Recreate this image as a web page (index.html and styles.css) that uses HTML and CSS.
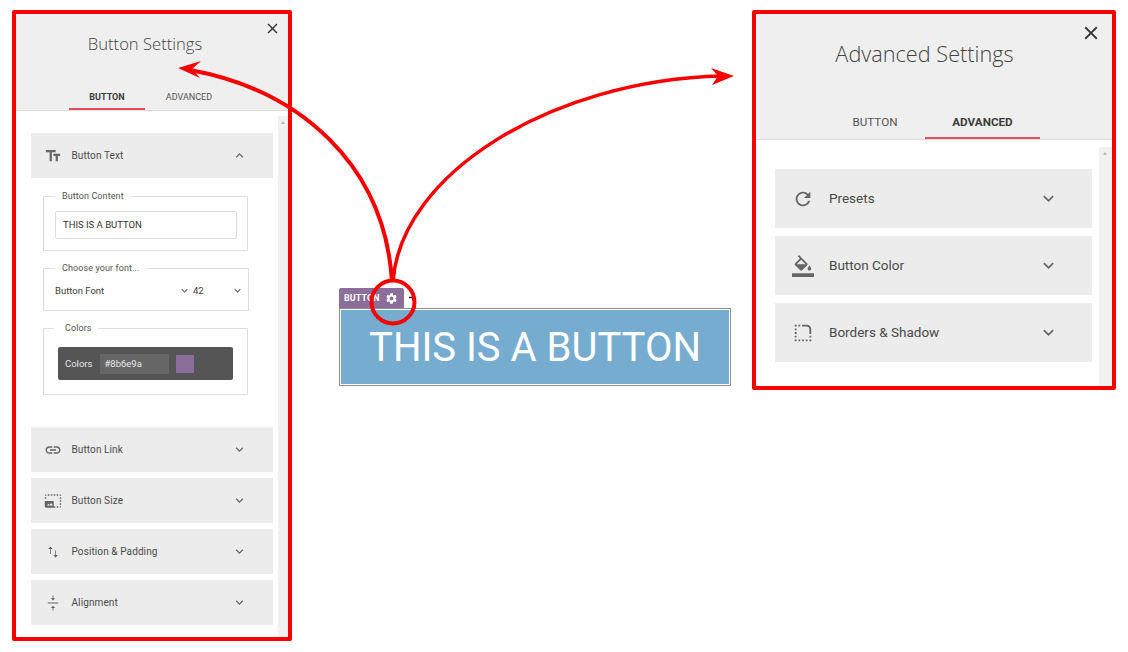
FILE: index.html
```html
<!DOCTYPE html>
<html lang="en">
<head>
    <meta charset="UTF-8" />
    <meta name="viewport" content="width=device-width, initial-scale=1.0" />
    <title>Button Settings</title>
    <link rel="stylesheet" href="styles.css">
</head>
<body>
    <svg class="sprite" aria-hidden="true">
        <symbol id="i-close" viewBox="0 0 24 24"><path d="M19 6.41 17.59 5 12 10.59 6.41 5 5 6.41 10.59 12 5 17.59 6.41 19 12 13.41 17.59 19 19 17.59 13.41 12z"/></symbol>
        <symbol id="i-down" viewBox="0 0 24 24"><path d="M16.59 8.59 12 13.17 7.41 8.59 6 10l6 6 6-6z"/></symbol>
        <symbol id="i-up" viewBox="0 0 24 24"><path d="M12 8l-6 6 1.41 1.41L12 10.83l4.59 4.58L18 14z"/></symbol>
        <symbol id="i-text" viewBox="0 0 24 24"><path d="M2.5 4v3h5v12h3V7h5V4h-13zm19 5h-9v3h3v7h3v-7h3V9z"/></symbol>
        <symbol id="i-link" viewBox="0 0 24 24"><path d="M3.9 12c0-1.71 1.39-3.1 3.1-3.1h4V7H7c-2.76 0-5 2.24-5 5s2.24 5 5 5h4v-1.9H7c-1.71 0-3.1-1.39-3.1-3.1zM8 13h8v-2H8v2zm9-6h-4v1.9h4c1.71 0 3.1 1.39 3.1 3.1s-1.39 3.1-3.1 3.1h-4V17h4c2.76 0 5-2.24 5-5s-2.24-5-5-5z"/></symbol>
        <symbol id="i-size" viewBox="0 0 24 24"><path d="M23 15h-2v2h2v-2zm0-4h-2v2h2v-2zm0 8h-2v2c1 0 2-1 2-2zM15 3h-2v2h2V3zm8 4h-2v2h2V7zm-2-4v2h2c0-1-1-2-2-2zM1 19c0 1.1.9 2 2 2h10v-9H1v7zm3-1 2-2.5 1.5 1.8 2-2.6L12 18H4zM3 7H1v2h2V7zm12 12h-2v2h2v-2zm4-16h-2v2h2V3zm0 16h-2v2h2v-2zM3 3C2 3 1 4 1 5h2V3zm8 0H9v2h2V3zM7 3H5v2h2V3z" fill-rule="evenodd"/></symbol>
        <symbol id="i-swap" viewBox="0 0 24 24"><path d="M16 16V9.5h-1V16h-2.5l3 3.5 3-3.5H16zM8.5 4.5l-3 3.5H8v6.5h1V8h2.5l-3-3.5z"/></symbol>
        <symbol id="i-align" viewBox="0 0 24 24"><path d="M9 18.5h2.4V22h1.2v-3.5H15l-3-3-3 3zM15 5.5h-2.4V2h-1.2v3.5H9l3 3 3-3zM5 11.4v1.2h14v-1.2H5z"/></symbol>
        <symbol id="i-refresh" viewBox="0 0 24 24"><path d="M17.65 6.35C16.2 4.9 14.21 4 12 4c-4.42 0-7.99 3.58-7.99 8s3.57 8 7.99 8c3.73 0 6.84-2.55 7.73-6h-2.08c-.82 2.33-3.04 4-5.65 4-3.31 0-6-2.69-6-6s2.69-6 6-6c1.66 0 3.14.69 4.22 1.78L13 11h7V4l-2.35 2.35z"/></symbol>
        <symbol id="i-fill" viewBox="0 0 24 24"><path d="M16.56 8.94 7.62 0 6.21 1.41l2.38 2.38-5.15 5.15c-.59.59-.59 1.54 0 2.12l5.5 5.5c.29.29.68.44 1.06.44s.77-.15 1.06-.44l5.5-5.5c.59-.58.59-1.53 0-2.12zM5.21 10 10 5.21 14.79 10H5.21zM19 11.5s-2 2.17-2 3.5c0 1.1.9 2 2 2s2-.9 2-2c0-1.33-2-3.5-2-3.5zM0 20h24v4H0z"/></symbol>
        <symbol id="i-corner" viewBox="0 0 24 24"><path d="M19 19h2v2h-2v-2zm0-2h2v-2h-2v2zM3 13h2v-2H3v2zm0 4h2v-2H3v2zm0-8h2V7H3v2zm0-4h2V3H3v2zm4 0h2V3H7v2zm8 16h2v-2h-2v2zm-4 0h2v-2h-2v2zm-4 0h2v-2H7v2zm-4 0h2v-2H3v2zM21 8c0-2.76-2.24-5-5-5h-5v2h5c1.65 0 3 1.35 3 3v5h2V8z"/></symbol>
        <symbol id="i-gear" viewBox="0 0 24 24"><path d="M19.14 12.94c.04-.3.06-.61.06-.94 0-.32-.02-.64-.07-.94l2.03-1.58c.18-.14.23-.41.12-.61l-1.92-3.32c-.12-.22-.37-.29-.59-.22l-2.39.96c-.5-.38-1.03-.7-1.62-.94l-.36-2.54c-.04-.24-.24-.41-.48-.41h-3.84c-.24 0-.43.17-.47.41l-.36 2.54c-.59.24-1.13.57-1.62.94l-2.39-.96c-.22-.08-.47 0-.59.22L2.74 8.87c-.12.21-.08.47.12.61l2.03 1.58c-.05.3-.09.63-.09.94s.02.64.07.94l-2.03 1.58c-.18.14-.23.41-.12.61l1.92 3.32c.12.22.37.29.59.22l2.39-.96c.5.38 1.03.7 1.62.94l.36 2.54c.05.24.24.41.48.41h3.84c.24 0 .44-.17.47-.41l.36-2.54c.59-.24 1.13-.56 1.62-.94l2.39.96c.22.08.47 0 .59-.22l1.92-3.32c.12-.22.07-.47-.12-.61l-2.01-1.58zM12 15.6c-1.98 0-3.6-1.62-3.6-3.6s1.62-3.6 3.6-3.6 3.6 1.62 3.6 3.6-1.62 3.6-3.6 3.6z"/></symbol>
    </svg>

    <!-- left panel -->
    <section class="panel panel-button">
        <svg class="close"><use href="#i-close"/></svg>
        <header class="panel-head">
            <h2>Button Settings</h2>
            <div class="tabs">
                <div class="tab active">BUTTON</div>
                <div class="tab">ADVANCED</div>
            </div>
        </header>
        <div class="panel-body">
            <div class="panel-content">
                <div class="row">
                    <svg class="row-icon"><use href="#i-text"/></svg>
                    <span class="row-label">Button Text</span>
                    <svg class="chevron"><use href="#i-up"/></svg>
                </div>
                <div class="row-detail">
                    <fieldset>
                        <legend>Button Content</legend>
                        <input class="text-input" type="text" value="THIS IS A BUTTON" />
                    </fieldset>
                    <fieldset class="font-field">
                        <legend>Choose your font...</legend>
                        <div class="font-row">
                            <span class="font-name">Button Font</span>
                            <svg class="small-chevron"><use href="#i-down"/></svg>
                            <span class="font-size">42</span>
                            <svg class="small-chevron"><use href="#i-down"/></svg>
                        </div>
                    </fieldset>
                    <fieldset class="color-field">
                        <legend>Colors</legend>
                        <div class="color-bar">
                            <span>Colors</span>
                            <span class="color-value">#8b6e9a</span>
                            <span class="color-swatch"></span>
                        </div>
                    </fieldset>
                </div>
                <div class="row">
                    <svg class="row-icon"><use href="#i-link"/></svg>
                    <span class="row-label">Button Link</span>
                    <svg class="chevron"><use href="#i-down"/></svg>
                </div>
                <div class="row">
                    <svg class="row-icon"><use href="#i-size"/></svg>
                    <span class="row-label">Button Size</span>
                    <svg class="chevron"><use href="#i-down"/></svg>
                </div>
                <div class="row">
                    <svg class="row-icon"><use href="#i-swap"/></svg>
                    <span class="row-label">Position &amp; Padding</span>
                    <svg class="chevron"><use href="#i-down"/></svg>
                </div>
                <div class="row">
                    <svg class="row-icon"><use href="#i-align"/></svg>
                    <span class="row-label">Alignment</span>
                    <svg class="chevron"><use href="#i-down"/></svg>
                </div>
            </div>
            <div class="scrollbar"></div>
        </div>
    </section>

    <!-- the button on the canvas -->
    <div class="widget">
        <div class="widget-tag">
            <span class="tag-label">BUTTON <svg class="tag-gear"><use href="#i-gear"/></svg></span>
            <svg class="tag-mark" viewBox="0 0 8 8"><path d="M0 1h6l2 2-3 4-1-4H0z"/></svg>
        </div>
        <div class="widget-button">THIS IS A BUTTON</div>
    </div>

    <!-- right panel -->
    <section class="panel panel-advanced">
        <svg class="close"><use href="#i-close"/></svg>
        <header class="panel-head">
            <h2>Advanced Settings</h2>
            <div class="tabs">
                <div class="tab">BUTTON</div>
                <div class="tab active">ADVANCED</div>
            </div>
        </header>
        <div class="panel-body">
            <div class="panel-content">
                <div class="row">
                    <svg class="row-icon"><use href="#i-refresh"/></svg>
                    <span class="row-label">Presets</span>
                    <svg class="chevron"><use href="#i-down"/></svg>
                </div>
                <div class="row">
                    <svg class="row-icon"><use href="#i-fill"/></svg>
                    <span class="row-label">Button Color</span>
                    <svg class="chevron"><use href="#i-down"/></svg>
                </div>
                <div class="row">
                    <svg class="row-icon"><use href="#i-corner"/></svg>
                    <span class="row-label">Borders &amp; Shadow</span>
                    <svg class="chevron"><use href="#i-down"/></svg>
                </div>
            </div>
            <div class="scrollbar"></div>
        </div>
    </section>

    <!-- red annotation drawn over everything -->
    <svg class="callouts" viewBox="0 0 1128 652">
        <circle cx="393" cy="302" r="21.5"/>
        <path d="M392 282C385 165 300 90 190 70"/>
        <path class="thin" d="M393 282C400 175 550 80 722 76"/>
        <polygon points="178,68 201,61 192,69 200,78"/>
        <polygon points="734,76 711,68 718,76 712,85"/>
    </svg>
</body>
</html>
```

FILE: styles.css
```css
:root {
    --panel-grey: #efefef;
    --row-grey: #ececec;
    --text: #4a4a4a;
    --red: #f70000;
    --tab-line: #e2505f;
    --purple: #8b6e9a;
}

* {
    box-sizing: border-box;
    margin: 0;
    padding: 0;
}

body {
    position: relative;
    width: 1128px;
    height: 652px;
    overflow: hidden;
    background: #fff;
    font-family: 'Roboto', sans-serif;
    color: var(--text);
}

svg {
    display: block;
    fill: currentColor;
}

.sprite {
    display: none;
}

/* panels sit on a free canvas */
.panel {
    position: absolute;
    display: flex;
    flex-direction: column;
    border: 4px solid var(--red);
    border-radius: 2px;
    overflow: hidden;
    background: #fff;
}

.panel-button {
    left: 12px;
    top: 10px;
    width: 280px;
    height: 631px;
}

.panel-advanced {
    left: 752px;
    top: 10px;
    width: 364px;
    height: 380px;
}

.close {
    position: absolute;
    color: #333;
}

.panel-button .close {
    right: 7px;
    top: 6px;
    width: 17px;
    height: 17px;
}

.panel-advanced .close {
    right: 10px;
    top: 8px;
    width: 22px;
    height: 22px;
}

.panel-head {
    display: flex;
    flex-direction: column;
    justify-content: space-between;
    flex: none;
    background: var(--panel-grey);
    border-bottom: 1px solid #dcdcdc;
}

.panel-head h2 {
    font-family: 'Open Sans', sans-serif;
    font-weight: 300;
    text-align: center;
    color: #444;
}

.panel-button .panel-head {
    height: 97px;
    padding: 18px 14px 0 0;
}

.panel-button h2 {
    font-size: 16.6px;
    line-height: 24px;
}

.panel-advanced .panel-head {
    height: 126px;
    padding: 26px 19px 0 0;
}

.panel-advanced h2 {
    font-size: 21.7px;
    line-height: 28px;
}

.tabs {
    display: flex;
}

.tab {
    text-align: center;
    border-bottom: 2px solid transparent;
    color: #555;
}

.tab.active {
    font-weight: 700;
    color: #3c3c3c;
    border-bottom-color: var(--tab-line);
}

.panel-button .tabs {
    gap: 6px;
    padding-left: 53px;
}

.panel-button .tab {
    width: 76px;
    height: 26px;
    font-size: 9px;
    line-height: 26px;
}

.panel-advanced .tabs {
    padding-left: 69px;
}

.panel-advanced .tab {
    width: 100px;
    height: 34px;
    font-size: 11.7px;
    line-height: 35px;
}

.panel-advanced .tab.active {
    width: 115px;
}

.panel-body {
    display: flex;
    flex: 1;
    min-height: 0;
}

.panel-content {
    flex: 1;
    min-width: 0;
}

.panel-button .panel-content {
    padding: 22px 5px 0 15px;
}

.panel-advanced .panel-content {
    padding: 29px 7px 0 19px;
}

.scrollbar {
    position: relative;
    flex: none;
    background: #f1f1f1;
}

.scrollbar::before {
    content: "";
    position: absolute;
    left: 50%;
    top: 5px;
    margin-left: -2.5px;
    border: 2.5px solid transparent;
    border-top: 0;
    border-bottom: 3px solid #b5b5b5;
}

.panel-button .scrollbar {
    width: 10px;
    margin-top: 5px;
}

.panel-advanced .scrollbar {
    width: 13px;
    margin-top: 7px;
}

.row {
    display: flex;
    align-items: center;
    background: var(--row-grey);
}

.panel-button .row {
    height: 45px;
    margin-bottom: 6px;
    padding-left: 13px;
    font-size: 10px;
}

.panel-button .row-label {
    margin-left: 9.5px;
    letter-spacing: 0.1px;
}

.panel-button .row-icon {
    width: 18px;
    height: 18px;
    color: #666;
}

.panel-button .chevron {
    width: 15px;
    height: 15px;
    margin-left: auto;
    margin-right: 26px;
    color: #666;
}

.panel-advanced .row {
    height: 59px;
    margin-bottom: 8px;
    padding-left: 17px;
    font-size: 13.5px;
}

.panel-advanced .row-label {
    margin-left: 15px;
    padding-bottom: 2px;
}

.panel-advanced .row-icon {
    width: 22px;
    height: 22px;
    color: #666;
}

.panel-advanced .chevron {
    width: 21px;
    height: 21px;
    margin-left: auto;
    margin-right: 33px;
    color: #666;
}

.row:first-child + .row-detail {
    margin-top: -6px;
}

.row-detail {
    display: flex;
    flex-direction: column;
    gap: 11px;
    padding: 12px 0 32px 12px;
}

fieldset {
    width: 205px;
    padding: 9px 10px 11px 11px;
    border: 1px solid #dedede;
    font-size: 9.5px;
}

legend {
    padding: 0 7px;
    font-size: 9px;
    line-height: 12px;
    letter-spacing: 0.1px;
    color: #555;
}

.text-input {
    display: block;
    width: 182px;
    height: 28px;
    padding: 0 7px 2px;
    border: 1px solid #dcdcdc;
    border-radius: 2px;
    font-family: inherit;
    font-size: 9.5px;
    color: #333;
}

.font-field {
    width: 206px;
    padding: 0 3px 0 11px;
}

.font-row {
    display: flex;
    align-items: center;
    height: 36px;
    padding-bottom: 4px;
    color: #3c3c3c;
}

.font-name {
    width: 123px;
}

.font-size {
    width: 38px;
    margin-left: 2px;
}

.small-chevron {
    width: 13px;
    height: 13px;
    color: #666;
}

.color-field {
    padding: 13px 14px 14px 14px;
}

.color-field legend {
    margin-left: -4px;
    padding: 0 6px 0 11px;
}

.color-bar {
    display: flex;
    align-items: center;
    width: 175px;
    height: 33px;
    padding-left: 7px;
    background: #555;
    border-radius: 2px;
    color: #e6e6e6;
    font-size: 9.5px;
}

.color-value {
    width: 69px;
    height: 20px;
    margin-left: 8px;
    padding-left: 4px;
    line-height: 20px;
    background: #666;
}

.color-swatch {
    width: 18px;
    height: 18px;
    margin-left: 7px;
    background: var(--purple);
}

/* the button being edited */
.widget {
    position: absolute;
    left: 339px;
    top: 288px;
    width: 392px;
}

.widget-tag {
    display: flex;
    align-items: center;
    height: 20px;
}

.tag-label {
    display: flex;
    align-items: center;
    gap: 4px;
    width: 65px;
    height: 20px;
    padding-left: 5px;
    background: var(--purple);
    border-radius: 2px 2px 0 0;
    color: #fff;
    font-size: 8.8px;
    font-weight: 700;
    letter-spacing: 0.2px;
}

.tag-gear {
    width: 13px;
    height: 13px;
    margin-left: 1px;
}

.tag-mark {
    width: 6px;
    height: 6px;
    margin: 2px 0 0 5px;
    color: #222;
}

.widget-button {
    height: 78px;
    border: 1px solid #8f8f8f;
    box-shadow: inset 0 0 0 1px #fff;
    background: #77acd1;
    color: #fff;
    font-size: 40px;
    line-height: 77px;
    text-align: center;
}

/* annotation layer */
.callouts {
    position: absolute;
    left: 0;
    top: 0;
    width: 1128px;
    height: 652px;
    fill: none;
    stroke: var(--red);
    stroke-width: 4;
    pointer-events: none;
}

.callouts .thin {
    stroke-width: 3.5;
}

.callouts polygon {
    fill: var(--red);
    stroke: none;
}
```
